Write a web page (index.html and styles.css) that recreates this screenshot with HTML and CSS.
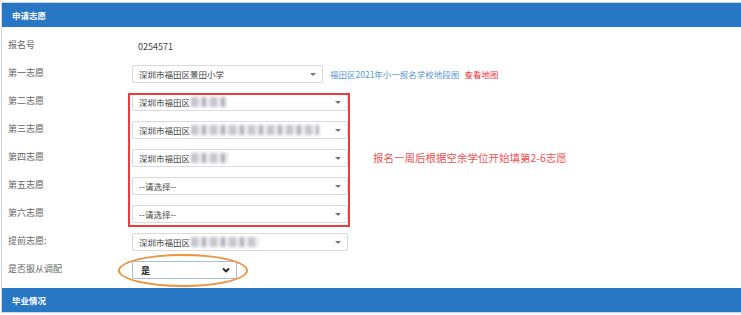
FILE: index.html
```html
<!DOCTYPE html>
<html lang="zh-CN">
<head>
  <meta charset="UTF-8" />
  <meta name="viewport" content="width=device-width, initial-scale=1.0" />
  <title>申请志愿</title>
  <link rel="stylesheet" href="styles.css">
</head>
<body>

<div class="panel">
  <div class="panel-head">申请志愿</div>
  <div class="panel-body">
    <div class="row">
      <label>报名号</label>
      <div class="field"><span class="value">0254571</span></div>
    </div>
    <div class="row">
      <label>第一志愿</label>
      <div class="field">
        <div class="select short">深圳市福田区景田小学<i class="caret"></i></div>
        <a class="map-link">福田区2021年小一报名学校地段图</a>
        <a class="map-view">查看地图</a>
      </div>
    </div>

    <div class="group">
      <div class="row">
        <label>第二志愿</label>
        <div class="field"><div class="select">深圳市福田区<span class="blur" style="width:36px"></span><i class="caret"></i></div></div>
      </div>
      <div class="row">
        <label>第三志愿</label>
        <div class="field"><div class="select">深圳市福田区<span class="blur" style="width:128px"></span><i class="caret"></i></div></div>
      </div>
      <div class="row">
        <label>第四志愿</label>
        <div class="field">
          <div class="select">深圳市福田区<span class="blur" style="width:38px"></span><i class="caret"></i></div>
          <span class="note">报名一周后根据空余学位开始填第2-6志愿</span>
        </div>
      </div>
      <div class="row">
        <label>第五志愿</label>
        <div class="field"><div class="select">--请选择--<i class="caret"></i></div></div>
      </div>
      <div class="row">
        <label>第六志愿</label>
        <div class="field"><div class="select">--请选择--<i class="caret"></i></div></div>
      </div>
      <div class="mark-box"></div>
    </div>

    <div class="row">
      <label>提前志愿:</label>
      <div class="field"><div class="select">深圳市福田区<span class="blur" style="width:68px"></span><i class="caret"></i></div></div>
    </div>
    <div class="row">
      <label>是否服从调配</label>
      <div class="field">
        <div class="native-wrap">
          <div class="native-select">是
            <svg class="chevron" width="8" height="6" viewBox="0 0 8 6"><polyline points="1,1.5 4,4.5 7,1.5" fill="none" stroke="#222" stroke-width="1.8"/></svg>
          </div>
          <div class="mark-ring"></div>
        </div>
      </div>
    </div>
  </div>
  <div class="panel-head">毕业情况</div>
</div>

</body>
</html>
```

FILE: styles.css
```css
body {
  margin: 0;
  background: #fff;
  font-family: "Noto Sans CJK SC", "Noto Sans", sans-serif;
  font-size: 9px;
  color: #555;
}
.panel {
  margin: 2px 0 0 1px;
  border-left: 1px solid #d6d6d6;
  border-top: 1px solid #c9d6e3;
  border-bottom: 1px solid #c9d6e3;
}
.panel-head {
  background-color: #2777c4;
  color: #fff;
  font-weight: bold;
  height: 24px;
  line-height: 24px;
  padding-left: 10px;
  font-size: 8.5px;
}
.panel-body {
  padding: 5px 0 4px 6px;
}
.row {
  display: grid;
  grid-template-columns: 124px 1fr;
  align-items: center;
  height: 28px;
}
.row label {
  margin-bottom: 3px;
  color: #666;
}
.field {
  display: flex;
  align-items: center;
}
.value {
  margin-left: 6px;
  color: #444;
}
.select {
  position: relative;
  box-sizing: border-box;
  width: 216px;
  height: 18px;
  border: 1px solid #dadada;
  border-radius: 2px;
  padding-left: 6px;
  display: flex;
  align-items: center;
  color: #444;
  font-size: 8.5px;
  overflow: hidden;
}
.select.short {
  width: 191px;
}
.caret {
  position: absolute;
  right: 6px;
  top: 7px;
  border-top: 3px solid #777;
  border-left: 3px solid transparent;
  border-right: 3px solid transparent;
}
.blur {
  display: inline-block;
  height: 10px;
  margin-left: 1px;
  background: repeating-linear-gradient(90deg, #c4c4cc 0 7px, #ececef 7px 11px, #aeaeb8 11px 15px, #f0f0f2 15px 19px);
  filter: blur(1.8px);
}
.map-link {
  margin-left: 7px;
  color: #5a97d6;
  font-size: 8.5px;
}
.map-view {
  margin-left: 5px;
  color: #f2343a;
  font-size: 8.5px;
}
.note {
  margin-left: 25px;
  margin-top: -2px;
  color: #f45050;
  font-size: 10.5px;
}
.group {
  position: relative;
}
.mark-box {
  position: absolute;
  left: 120px;
  top: 5px;
  width: 222px;
  height: 134px;
  box-sizing: border-box;
  border: 2px solid #ee3b3b;
  pointer-events: none;
}
.native-wrap {
  position: relative;
}
.native-select {
  box-sizing: border-box;
  width: 105px;
  height: 18px;
  border: 1px solid #a9bfd9;
  border-radius: 1px;
  padding: 0 6px 0 8px;
  display: flex;
  align-items: center;
  justify-content: space-between;
  color: #222;
  font-size: 9px;
  font-weight: bold;
}
.mark-ring {
  position: absolute;
  left: -14px;
  right: -11px;
  top: -7px;
  bottom: -8px;
  border: 2px solid #f0923c;
  border-radius: 50%;
}
```
